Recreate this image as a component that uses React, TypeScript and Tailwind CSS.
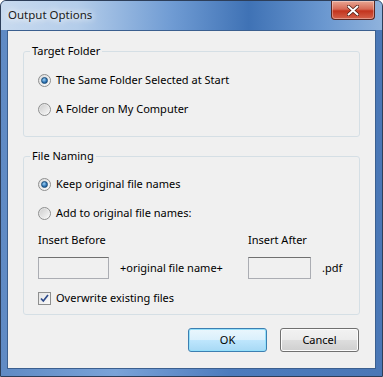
import React from "react";

function Radio({ checked }: { checked?: boolean }) {
  return (
    <span className="relative inline-flex h-[13px] w-[13px] shrink-0 items-center justify-center rounded-full border border-[#8e8f8f] bg-[linear-gradient(135deg,#dcdcdc,#fbfbfb)]">
      {checked ? (
        <span className="h-[7px] w-[7px] rounded-full border border-[#1a4d7a] bg-[radial-gradient(circle_at_40%_35%,#9fd3f5,#2a6fb1_60%,#194c7f)]" />
      ) : (
        <span className="h-[9px] w-[9px] rounded-full bg-[linear-gradient(135deg,#cfcfcf,#f6f6f6)]" />
      )}
    </span>
  );
}

function Check() {
  return (
    <span className="inline-flex h-[13px] w-[13px] shrink-0 items-center justify-center border border-[#8e8f8f] bg-[linear-gradient(135deg,#e4e4e4,#fafafa)]">
      <svg width="9" height="9" viewBox="0 0 9 9">
        <path d="M1 4.5 L3.3 7 L8 1" fill="none" stroke="#2d4a8a" strokeWidth="1.7" />
      </svg>
    </span>
  );
}

const row = "flex items-center gap-[5px] text-[11px] leading-[16px]";

export default function App() {
  return (
    <div
      className="flex h-[377px] w-[383px] flex-col overflow-hidden rounded-t-[6px] border border-[#2d3e59] bg-[linear-gradient(90deg,#5f8ac4_0%,#7aa3d8_30%,#4c7bbd_60%,#4a77b6_100%)] text-[#000]"
      style={{ fontFamily: '"Noto Sans", "Segoe UI", sans-serif' }}
    >
      {/* title bar */}
      <div className="flex h-[29px] shrink-0 items-start justify-between bg-[linear-gradient(90deg,#c8daef_0%,#b4cdea_20%,#6f9bd3_45%,#3f72b5_65%,#6b98d0_85%,#8fb2dc_100%)]">
        <div className="pl-[7px] pt-[6px] text-[11.5px] leading-[16px] text-[#1a1a1a] [text-shadow:0_0_6px_#ffffff,0_0_8px_#ffffff]">
          Output Options
        </div>
        <div className="mr-[7px] flex h-[19px] w-[44px] items-center justify-center rounded-b-[4px] border border-t-0 border-[#5a2620] bg-[linear-gradient(180deg,#e8a693_0%,#d66a56_45%,#c3341e_55%,#d4624a_100%)] shadow-[inset_0_0_0_1px_rgba(255,255,255,0.35)]">
          <svg width="12" height="11" viewBox="0 0 12 11">
            <path d="M1.5 1.5 L10.5 9.5 M10.5 1.5 L1.5 9.5" stroke="#4a1a10" strokeWidth="3.4" strokeLinecap="round" />
            <path d="M1.5 1.5 L10.5 9.5 M10.5 1.5 L1.5 9.5" stroke="#ffffff" strokeWidth="2" strokeLinecap="round" />
          </svg>
        </div>
      </div>
      {/* client area */}
      <div className="mx-[6px] mb-[7px] flex flex-1 flex-col border border-[#3b5f8f] bg-[#f0f0f0] px-[15px] pt-[12px]">
        <fieldset className="h-[94px] rounded-[3px] border border-[#d5dfe5]">
          <legend className="ml-[6px] px-[2px] text-[11px] leading-[16px]">Target Folder</legend>
          <div className="pl-[14px]">
            <div className={"mt-[13px] " + row}>
              <Radio checked />
              <span>The Same Folder Selected at Start</span>
            </div>
            <div className={"mt-[13px] " + row}>
              <Radio />
              <span>A Folder on My Computer</span>
            </div>
          </div>
        </fieldset>
        <fieldset className="mt-[11px] h-[167px] rounded-[3px] border border-[#d5dfe5]">
          <legend className="ml-[6px] px-[2px] text-[11px] leading-[16px]">File Naming</legend>
          <div className="pl-[14px]">
            <div className={"mt-[12px] " + row}>
              <Radio checked />
              <span>Keep original file names</span>
            </div>
            <div className={"mt-[13px] " + row}>
              <Radio />
              <span>Add to original file names:</span>
            </div>
            <div className="mt-[11px] flex text-[11px] leading-[16px]">
              <span className="w-[210px]">Insert Before</span>
              <span>Insert After</span>
            </div>
            <div className="mt-[9px] flex items-center text-[11px] leading-[16px]">
              <div className="h-[22px] w-[71px] border border-[#abadb3] border-t-[#707070] bg-[#f0f0f0]" />
              <span className="ml-[11px] w-[128px]">+original file name+</span>
              <div className="h-[22px] w-[63px] border border-[#abadb3] border-t-[#707070] bg-[#f0f0f0]" />
              <span className="ml-[11px]">.pdf</span>
            </div>
            <div className={"mt-[11px] " + row}>
              <Check />
              <span>Overwrite existing files</span>
            </div>
          </div>
        </fieldset>
        <div className="mt-[13px] flex justify-end gap-[13px] pr-[1px]">
          <button className="h-[24px] w-[79px] rounded-[3px] border border-[#3c7fb1] bg-[linear-gradient(180deg,#eaf6fd_0%,#d9f0fc_50%,#bee6fd_51%,#a7d9f5_100%)] text-[11px] leading-[16px] shadow-[inset_0_0_0_1px_#94e0fb]">
            OK
          </button>
          <button className="h-[24px] w-[79px] rounded-[3px] border border-[#707070] bg-[linear-gradient(180deg,#f2f2f2_0%,#ebebeb_50%,#dddddd_51%,#cfcfcf_100%)] text-[11px] leading-[16px] shadow-[inset_0_0_0_1px_#fcfcfc]">
            Cancel
          </button>
        </div>
      </div>
    </div>
  );
}
